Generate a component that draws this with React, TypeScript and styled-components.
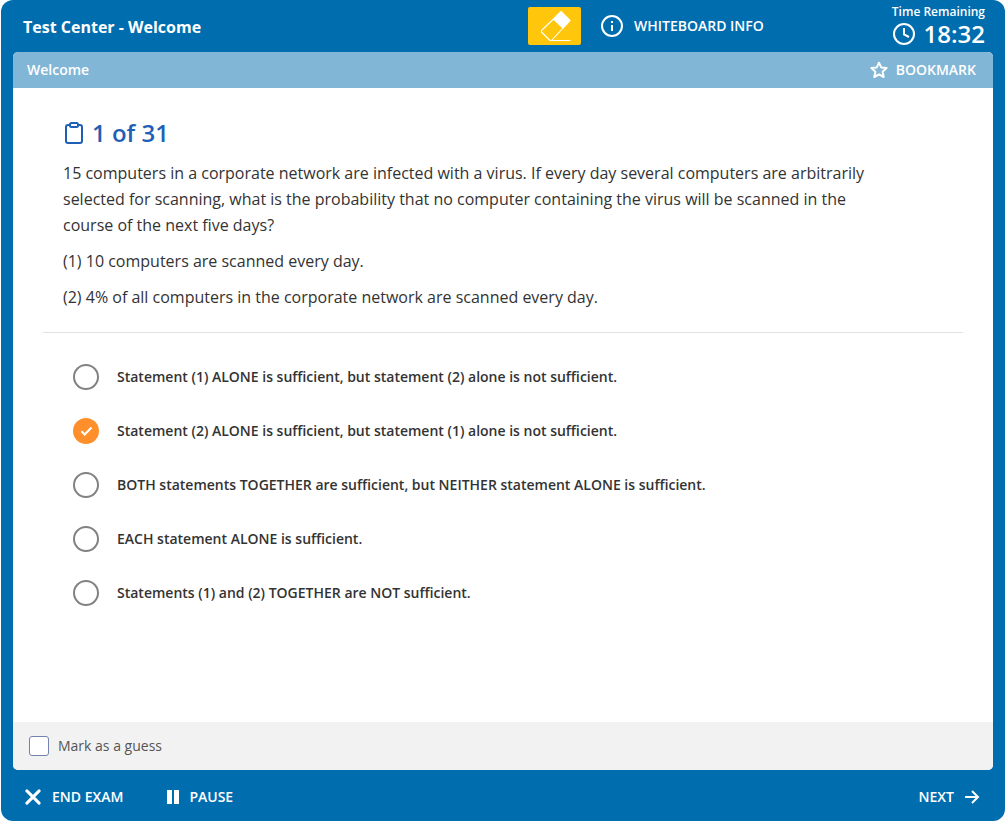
import React, { useState } from "react";
import styled, { createGlobalStyle } from "styled-components";

const GlobalStyle = createGlobalStyle`
  *, *::before, *::after { box-sizing: border-box; }
  body {
    margin: 0;
    background: #ffffff;
    color: #333333;
    font-family: "Open Sans", "Noto Sans", sans-serif;
  }
  button, input { font: inherit; color: inherit; }
`;

const Shell = styled.div`
  display: flex;
  flex-direction: column;
  min-height: 100vh;
  margin: 0 1px;
  padding: 0 12px;
  background: #006daf;
  border-radius: 12px;
  color: #ffffff;
`;

const Header = styled.header`
  display: flex;
  align-items: center;
  height: 52px;
  padding: 0 8px 0 10px;
`;

const Title = styled.h1`
  flex: 1;
  margin: 0;
  padding-top: 2px;
  font-size: 16px;
  line-height: 24px;
  font-weight: 700;
`;

const Tools = styled.div`
  display: flex;
  align-items: center;
  gap: 20px;
  margin-right: 128px;
`;

const PlainButton = styled.button<{ $gap: number }>`
  display: inline-flex;
  align-items: center;
  gap: ${(p) => p.$gap}px;
  padding: 0;
  border: 0;
  background: none;
  color: #ffffff;
  font-size: 14px;
  line-height: 20px;
  font-weight: 600;
  text-transform: uppercase;
  cursor: pointer;
`;

const EraserButton = styled.button`
  display: flex;
  align-items: center;
  justify-content: center;
  width: 53px;
  height: 38px;
  padding: 0;
  border: 0;
  border-radius: 2px;
  background: #ffc60b;
  cursor: pointer;
`;

const Timer = styled.div`
  display: flex;
  flex-direction: column;
  align-items: flex-end;
`;

const TimerLabel = styled.span`
  font-size: 12px;
  line-height: 16px;
  font-weight: 600;
`;

const TimerValue = styled.span`
  display: flex;
  align-items: center;
  gap: 9px;
  font-size: 24px;
  line-height: 28px;
  font-weight: 600;
`;

const Panel = styled.main`
  display: flex;
  flex: 1;
  flex-direction: column;
  overflow: hidden;
  border-radius: 5px;
  background: #ffffff;
  color: #333333;
`;

const SectionBar = styled.div`
  display: flex;
  align-items: center;
  justify-content: space-between;
  height: 36px;
  padding: 0 17px 0 14px;
  background: #81b6d7;
  color: #ffffff;
`;

const SectionName = styled.h2`
  margin: 0;
  font-size: 14px;
  line-height: 20px;
  font-weight: 600;
`;

const Content = styled.div`
  flex: 1;
  padding: 28px 30px;
`;

const Question = styled.section`
  padding: 0 90px 12px 20px;
`;

const Counter = styled.h3`
  display: flex;
  align-items: center;
  gap: 7px;
  margin: 0 0 10px;
  color: #1f5fb5;
  font-size: 24px;
  line-height: 34px;
  font-weight: 600;
`;

const Paragraph = styled.p`
  margin: 0 0 10px;
  font-size: 16px;
  line-height: 26px;
`;

const Choices = styled.fieldset`
  display: flex;
  flex-direction: column;
  align-items: flex-start;
  gap: 28px;
  margin: 0;
  padding: 31px 30px 0;
  border: 0;
  border-top: 1px solid #e2e2e2;
`;

const Choice = styled.label`
  display: grid;
  grid-template-columns: 26px auto;
  align-items: center;
  column-gap: 18px;
  min-height: 26px;
  font-size: 14px;
  line-height: 20px;
  font-weight: 600;
  cursor: pointer;
`;

const Radio = styled.input`
  grid-area: 1 / 1;
  appearance: none;
  width: 26px;
  height: 26px;
  margin: 0;
  border: 2px solid #828282;
  border-radius: 50%;
  background: #ffffff;
  cursor: pointer;

  &:checked {
    border-color: #ff8f2b;
    background: #ff8f2b;
  }
`;

const Tick = styled.svg`
  grid-area: 1 / 1;
  z-index: 1;
  pointer-events: none;
`;

const ChoiceText = styled.span`
  grid-area: 1 / 2;
`;

const GuessBar = styled.div`
  display: flex;
  align-items: center;
  height: 48px;
  padding: 0 16px;
  background: #f2f2f2;
`;

const GuessLabel = styled.label`
  display: flex;
  align-items: center;
  gap: 9px;
  color: #555555;
  font-size: 14px;
  line-height: 20px;
  cursor: pointer;
`;

const Checkbox = styled.input`
  appearance: none;
  width: 20px;
  height: 20px;
  margin: 0;
  border: 1px solid #7383ad;
  border-radius: 3px;
  background: #ffffff;
  cursor: pointer;

  &:checked {
    background: #006daf;
  }
`;

const Footer = styled.footer`
  display: flex;
  align-items: center;
  justify-content: space-between;
  height: 51px;
  padding: 3px 13px 0 12px;
`;

const FooterGroup = styled.div`
  display: flex;
  gap: 44px;
`;

const EraserIcon = () => (
  <svg width="32" height="32" viewBox="0 0 32 32" fill="none" stroke="#ffffff" strokeWidth="1.1" strokeLinejoin="round" strokeLinecap="round" aria-hidden="true">
    <path d="M22 1.500 31 10.500 24 18 14.500 9Z" fill="#ffffff" />
    <path d="M14.500 9 2.500 20.500V22L11 30.500H12.500L24 18M12.500 30.500H31" />
  </svg>
);

const InfoIcon = () => (
  <svg width="22" height="22" viewBox="0 0 22 22" fill="none" stroke="#ffffff" strokeWidth="2" aria-hidden="true">
    <circle cx="11" cy="11" r="10" />
    <path d="M11 10v6M11 6v2" />
  </svg>
);

const ClockIcon = () => (
  <svg width="22" height="22" viewBox="0 0 22 22" fill="none" stroke="#ffffff" strokeWidth="2" aria-hidden="true">
    <circle cx="11" cy="11" r="10" />
    <path d="M11 5v6.500l5 2.500" />
  </svg>
);

const StarIcon = () => (
  <svg width="18" height="18" viewBox="0 0 18 18" fill="none" stroke="#ffffff" strokeWidth="2" strokeLinejoin="round" aria-hidden="true">
    <path d="M9 1.700 11.200 6.400 16.600 7 12.600 10.700 13.700 16 9 13.400 4.300 16 5.400 10.700 1.400 7 6.800 6.400Z" />
  </svg>
);

const ClipboardIcon = () => (
  <svg width="22" height="24" viewBox="0 0 22 24" fill="none" stroke="#1f5fb5" strokeWidth="2" strokeLinejoin="round" aria-hidden="true">
    <path d="M7 4H5a2 2 0 0 0-2 2v14a2 2 0 0 0 2 2h12a2 2 0 0 0 2-2V6a2 2 0 0 0-2-2h-2" />
    <rect x="7" y="2" width="8" height="4" rx="1.500" />
  </svg>
);

const CloseIcon = () => (
  <svg width="16" height="16" viewBox="0 0 16 16" fill="none" stroke="#ffffff" strokeWidth="3" strokeLinecap="round" aria-hidden="true">
    <path d="M1.900 1.900 14.100 14.100M14.100 1.900 1.900 14.100" />
  </svg>
);

const PauseIcon = () => (
  <svg width="12" height="14" viewBox="0 0 12 14" fill="#ffffff" aria-hidden="true">
    <path d="M0 0h5v14H0ZM7 0h5v14H7Z" />
  </svg>
);

const ArrowIcon = () => (
  <svg width="15" height="14" viewBox="0 0 15 14" fill="none" stroke="#ffffff" strokeWidth="2" aria-hidden="true">
    <path d="M0 7h13M7 1l6 6-6 6" />
  </svg>
);

const answers = [
  "Statement (1) ALONE is sufficient, but statement (2) alone is not sufficient.",
  "Statement (2) ALONE is sufficient, but statement (1) alone is not sufficient.",
  "BOTH statements TOGETHER are sufficient, but NEITHER statement ALONE is sufficient.",
  "EACH statement ALONE is sufficient.",
  "Statements (1) and (2) TOGETHER are NOT sufficient.",
];

export default function App() {
  const [selected, setSelected] = useState(1);

  return (
    <>
      <GlobalStyle />
      <Shell>
        <Header>
          <Title>Test Center - Welcome</Title>
          <Tools>
            <EraserButton type="button" aria-label="Eraser">
              <EraserIcon />
            </EraserButton>
            <PlainButton type="button" $gap={11}>
              <InfoIcon />
              Whiteboard info
            </PlainButton>
          </Tools>
          <Timer>
            <TimerLabel>Time Remaining</TimerLabel>
            <TimerValue>
              <ClockIcon />
              18:32
            </TimerValue>
          </Timer>
        </Header>
        <Panel>
          <SectionBar>
            <SectionName>Welcome</SectionName>
            <PlainButton type="button" $gap={8}>
              <StarIcon />
              Bookmark
            </PlainButton>
          </SectionBar>
          <Content>
            <Question>
              <Counter>
                <ClipboardIcon />1 of 31
              </Counter>
              <Paragraph>
                15 computers in a corporate network are infected with a virus. If every day several computers are
                arbitrarily selected for scanning, what is the probability that no computer containing the virus will
                be scanned in the course of the next five days?
              </Paragraph>
              <Paragraph>(1) 10 computers are scanned every day.</Paragraph>
              <Paragraph>(2) 4% of all computers in the corporate network are scanned every day.</Paragraph>
            </Question>
            <Choices aria-label="Answer choices">
              {answers.map((answer, i) => (
                <Choice key={answer}>
                  <Radio type="radio" name="answer" checked={selected === i} onChange={() => setSelected(i)} />
                  {selected === i && (
                    <Tick width="26" height="26" viewBox="0 0 26 26" fill="none" stroke="#ffffff" strokeWidth="2" aria-hidden="true">
                      <path d="M8.500 13.300 11.700 16.500 18.500 9.500" />
                    </Tick>
                  )}
                  <ChoiceText>{answer}</ChoiceText>
                </Choice>
              ))}
            </Choices>
          </Content>
          <GuessBar>
            <GuessLabel>
              <Checkbox type="checkbox" />
              Mark as a guess
            </GuessLabel>
          </GuessBar>
        </Panel>
        <Footer>
          <FooterGroup>
            <PlainButton type="button" $gap={11}>
              <CloseIcon />
              End exam
            </PlainButton>
            <PlainButton type="button" $gap={10}>
              <PauseIcon />
              Pause
            </PlainButton>
          </FooterGroup>
          <PlainButton type="button" $gap={11}>
            Next
            <ArrowIcon />
          </PlainButton>
        </Footer>
      </Shell>
    </>
  );
}
